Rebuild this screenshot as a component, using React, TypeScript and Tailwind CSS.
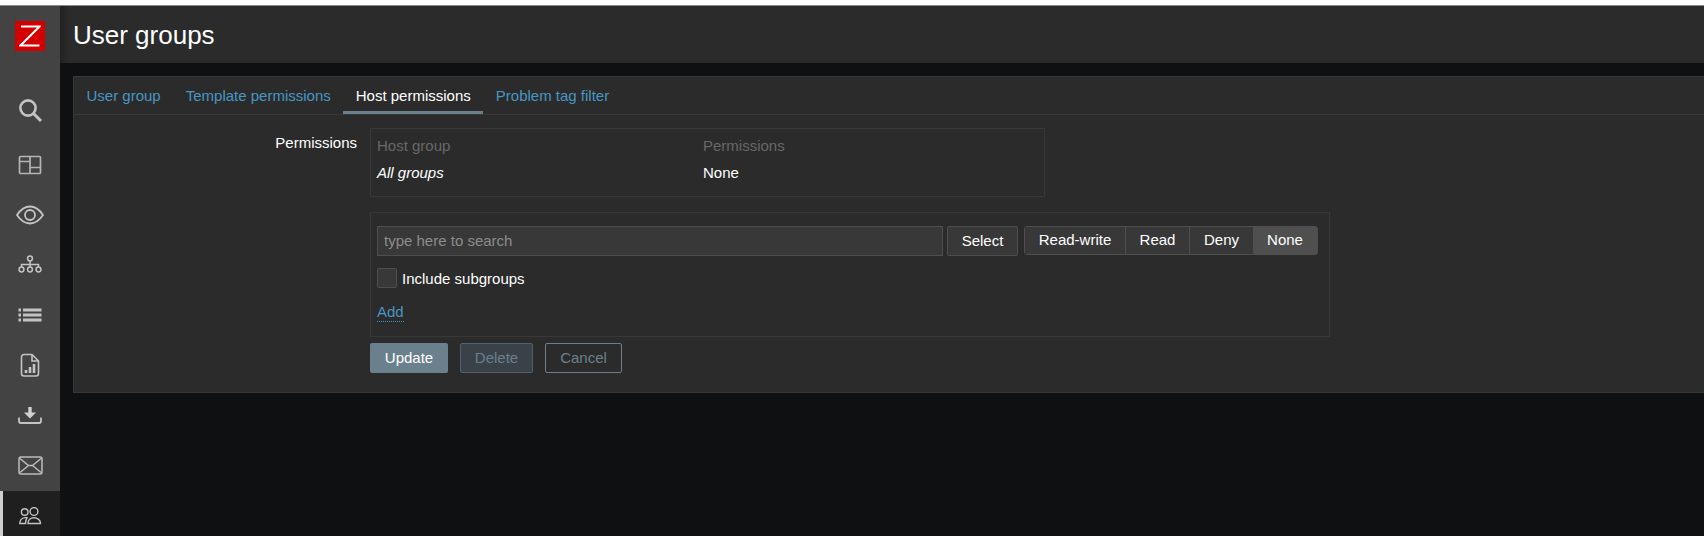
const Search = () => (
  <svg width="28" height="28" viewBox="0 0 28 28" fill="none" stroke="#c4c4c4" strokeWidth="2.6">
    <circle cx="12" cy="12" r="7.6" />
    <path d="M17.5 17.5 25 25" strokeWidth="3" />
  </svg>
);

const Dashboard = () => (
  <svg width="24" height="20" viewBox="0 0 24 20" fill="none" stroke="#b4b4b4" strokeWidth="1.7">
    <rect x="1.500" y="1.500" width="21" height="17" rx="1" />
    <path d="M1.500 6.500H12M12 1.500v17M12 12.500h10.500" />
  </svg>
);

const Eye = () => (
  <svg width="28" height="20" viewBox="0 0 28 20" fill="none" stroke="#c4c4c4" strokeWidth="1.8">
    <path d="M1 10C5 4 9 1.500 14 1.500S23 4 27 10c-4 6-8 8.500-13 8.500S5 16 1 10Z" />
    <circle cx="14" cy="10" r="5" />
  </svg>
);

const Tree = () => (
  <svg width="24" height="20" viewBox="0 0 24 20" fill="none" stroke="#c4c4c4" strokeWidth="1.500">
    <circle cx="12" cy="3.500" r="2.400" />
    <path d="M12 6v6M3.500 12V9.500h17V12" />
    <circle cx="3.500" cy="14.500" r="2.400" />
    <circle cx="12" cy="14.500" r="2.400" />
    <circle cx="20.500" cy="14.500" r="2.400" />
  </svg>
);

const List = () => (
  <svg width="24" height="14" viewBox="0 0 24 14" fill="#c4c4c4">
    <rect x="0.500" y="0.500" width="2.500" height="3" />
    <rect x="0.500" y="5.500" width="2.500" height="3" />
    <rect x="0.500" y="10.500" width="2.500" height="3" />
    <rect x="5" y="0.500" width="18.500" height="3" />
    <rect x="5" y="5.500" width="18.500" height="3" />
    <rect x="5" y="10.500" width="18.500" height="3" />
  </svg>
);

const Report = () => (
  <svg width="20" height="24" viewBox="0 0 20 24" fill="none" stroke="#c4c4c4" strokeWidth="1.600">
    <path d="M12 1.500H4A2.500 2.500 0 0 0 1.500 4v16.500A2.500 2.500 0 0 0 4 23h12a2.500 2.500 0 0 0 2.500-2.500V8L12 1.500Z" />
    <path d="M12 1.500V8h6.500" />
    <path d="M6 20v-3M10 20v-6M14 20v-9" strokeWidth="2.600" />
  </svg>
);

const Download = () => (
  <svg width="24" height="18" viewBox="0 0 24 18" fill="none">
    <path d="M10.300 1h3.400v5.500H18L12 12.500 6 6.500h4.300V1Z" fill="#d0d0d0" />
    <path d="M1 11.500V15a2 2 0 0 0 2 2h18a2 2 0 0 0 2-2v-3.500" stroke="#c4c4c4" strokeWidth="1.800" />
  </svg>
);

const Mail = () => (
  <svg width="25" height="19" viewBox="0 0 25 19" fill="none" stroke="#bcbcbc" strokeWidth="1.500">
    <rect x="1" y="1" width="23" height="17" rx="2" />
    <path d="M2 2.500 10.500 9.500h4L23 2.500M2 16.500 10.500 9.500M14.500 9.500 23 16.500" />
  </svg>
);

const Users = () => (
  <svg width="23" height="18" viewBox="0 0 23 18" fill="none" stroke="#c4c4c4" strokeWidth="1.400">
    <circle cx="5.700" cy="5" r="3.300" />
    <circle cx="15" cy="4.500" r="3.900" />
    <path d="M0.800 16.500c0-3 2-5.600 5.200-5.900h2c-1 1.600-1.500 3.600-1.500 5.900H0.800Z" />
    <path d="M9 16.500c0-3.500 2.500-5.700 6-5.700s6.500 2.200 6.500 5.700H9Z" />
  </svg>
);

const navItems = [
  { icon: <Search />, h: "h-[50px]" },
  { icon: <Dashboard />, h: "h-[50px] mt-[5px]" },
  { icon: <Eye />, h: "h-[50px]" },
  { icon: <Tree />, h: "h-[50px]" },
  { icon: <List />, h: "h-[50px]" },
  { icon: <Report />, h: "h-[50px]" },
  { icon: <Download />, h: "h-[50px]" },
  { icon: <Mail />, h: "h-[51px]" },
];

const tabs = ["User group", "Template permissions", "Host permissions", "Problem tag filter"];

const App = () => {
  return (
    <div className="h-[536px] w-[1704px] overflow-hidden bg-white font-['Liberation_Sans',Arial,sans-serif] text-[15px] text-white">
      <div className="mt-[5px] flex h-[531px] border-t border-[#8a8a8a] bg-[#0e1012]">
        {/* sidebar */}
        <aside className="flex w-[60px] shrink-0 flex-col bg-[#434343]">
          <div className="flex h-[79px] justify-center pt-[15px]">
            <div className="flex h-[30px] w-[30px] items-center justify-center bg-[#d40000]">
              <svg width="22" height="22" viewBox="0 0 22 22" fill="none" stroke="#fff" strokeWidth="2">
                <path d="M2 1.500h18.500L1.500 20.500h19" />
              </svg>
            </div>
          </div>
          {navItems.map((item, i) => (
            <div key={i} className={`flex ${item.h} items-center justify-center`}>
              {item.icon}
            </div>
          ))}
          <div className="flex h-[45px] items-center justify-center border-l-[3px] border-[#cfcfcf] bg-[#1f1f1f] pt-[4px] pr-[3px]">
            <Users />
          </div>
        </aside>

        <main className="min-w-0 flex-1">
          <header className="flex h-[57px] items-center bg-[#2b2b2b] bg-gradient-to-r from-[#222222] to-[#2b2b2b] to-[10px] pl-[13px]">
            <h1 className="text-[26px] leading-none">User groups</h1>
          </header>

          <section className="mt-[13px] -mr-[2px] ml-[13px] h-[317px] border border-[#383838] bg-[#2b2b2b]">
            <div className="flex h-[38px] border-b border-[#383838]">
              {tabs.map((t) => (
                <div
                  key={t}
                  className={
                    t === "Host permissions"
                      ? "flex h-[37px] items-center border-b-[3px] border-[#6b808d] px-[12.5px] pt-[5px] text-white"
                      : "flex h-[37px] items-center border-b-[3px] border-transparent px-[12.5px] pt-[5px] text-[#4796c4]"
                  }
                >
                  {t}
                </div>
              ))}
            </div>

            <div className="flex">
              <div className="w-[283px] shrink-0 pt-[19px] text-right leading-[17px]">Permissions</div>

              <div className="ml-[13px] pt-[13px]">
                <div className="h-[69px] w-[675px] border border-[#383838] px-[6px] pt-[8px]">
                  <div className="flex h-[19px] items-center text-[#686868]">
                    <span className="w-[326px]">Host group</span>
                    <span>Permissions</span>
                  </div>
                  <div className="mt-[8px] flex h-[19px] items-center">
                    <span className="w-[326px] italic">All groups</span>
                    <span>None</span>
                  </div>
                </div>

                <div className="mt-[15px] h-[125px] w-[960px] border border-[#383838] px-[6px] pt-[13px]">
                  <div className="flex items-start">
                    <div className="flex h-[30px] w-[566px] items-center border border-[#4f4f4f] bg-[#383838] px-[6px] text-[#8c8c8c]">
                      type here to search
                    </div>
                    <button className="ml-[4px] h-[30px] w-[71px] rounded-[2px] border border-[#4f4f4f] bg-[#383838]">
                      Select
                    </button>
                    <div className="ml-[6px] flex h-[29px] rounded-[3px] border border-[#4f4f4f]">
                      <div className="flex w-[100px] items-center justify-center bg-[#383838]">Read-write</div>
                      <div className="flex w-[64px] items-center justify-center border-l border-[#4f4f4f] bg-[#383838]">Read</div>
                      <div className="flex w-[64px] items-center justify-center border-l border-[#4f4f4f] bg-[#383838]">Deny</div>
                      <div className="flex w-[64px] items-center justify-center bg-[#4f4f4f]">None</div>
                    </div>
                  </div>
                  <div className="mt-[12px] flex h-[20px] items-center">
                    <div className="h-[20px] w-[20px] rounded-[2px] border border-[#4f4f4f] bg-[#383838]" />
                    <span className="ml-[5px] pt-[3px]">Include subgroups</span>
                  </div>
                  <div className="mt-[15px] leading-[17px]">
                    <span className="border-b border-dotted border-[#4796c4] pb-[1px] text-[#4796c4]">Add</span>
                  </div>
                </div>

                <div className="mt-[6px] flex">
                  <button className="h-[30px] w-[78px] rounded-[2px] bg-[#6b808d]">Update</button>
                  <button className="ml-[12px] h-[30px] w-[73px] rounded-[2px] border border-[#51626d] bg-[#394248] text-[#6b808d]">
                    Delete
                  </button>
                  <button className="ml-[12px] h-[30px] w-[77px] rounded-[2px] border border-[#6b808d] text-[#6b808d]">
                    Cancel
                  </button>
                </div>
              </div>
            </div>
          </section>
        </main>
      </div>
    </div>
  );
};
export default App;
